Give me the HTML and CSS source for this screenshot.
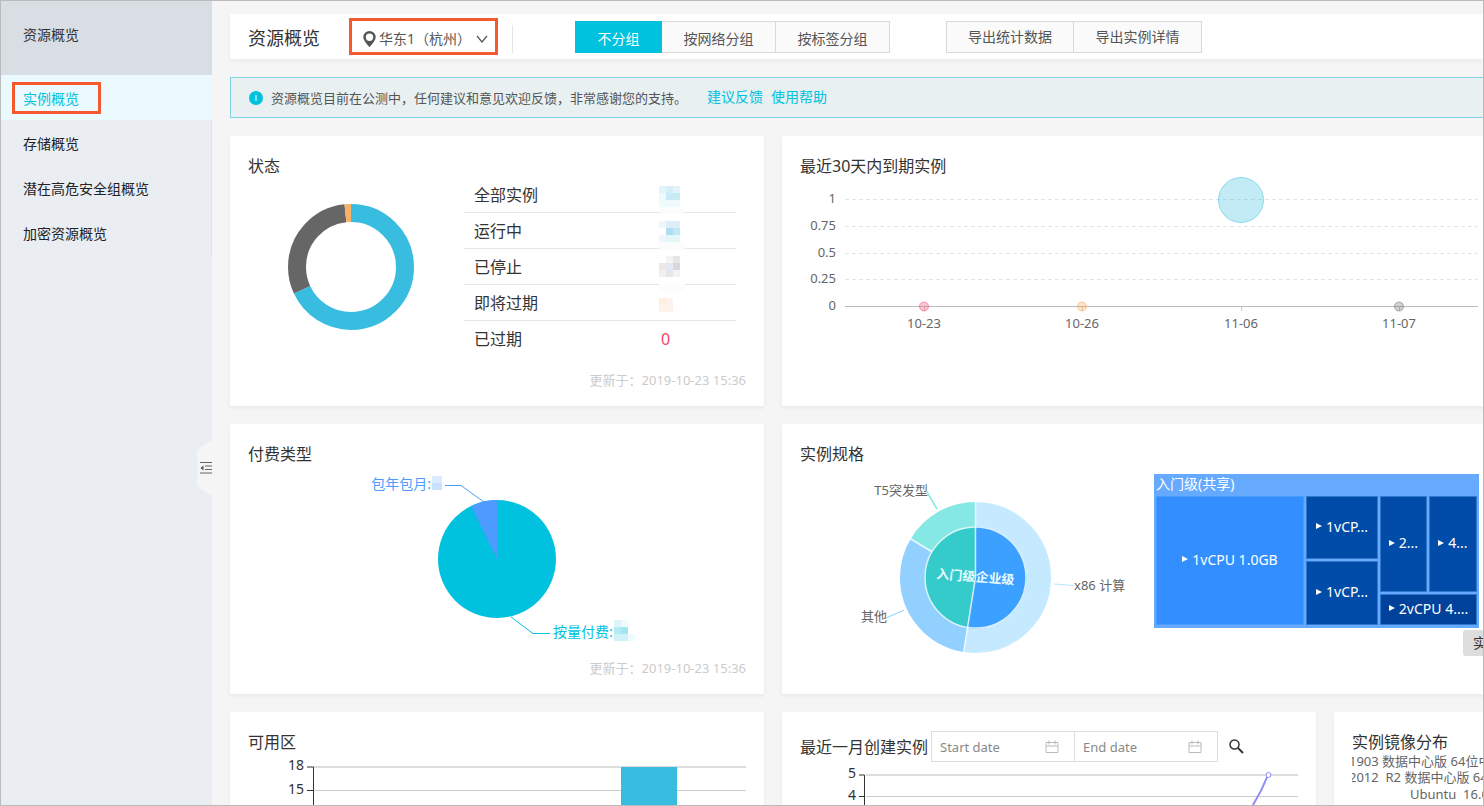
FILE: index.html
```html
<!DOCTYPE html>
<html lang="zh-CN">
<head>
    <meta charset="UTF-8">
    <meta name="viewport" content="width=device-width, initial-scale=1.0">
    <title>资源概览</title>
    <link rel="stylesheet" href="styles.css">
</head>
<body>
    <aside class="sidebar">
        <div class="sidebar-title">资源概览</div>
        <nav class="sidebar-nav">
            <a href="#" class="active"><span class="marked">实例概览</span></a>
            <a href="#">存储概览</a>
            <a href="#">潜在高危安全组概览</a>
            <a href="#">加密资源概览</a>
        </nav>
        <button type="button" class="collapse-btn" aria-label="收起">
            <svg width="16" height="56" viewBox="0 0 16 56">
                <path d="M0 10 L15 0 H16 V56 H15 L0 46 Z" fill="#f5f5f5"/>
                <path d="M3 22.5h12M8 26h7M8 29.5h7M3 33h12" stroke="#666" stroke-width="1.2"/>
                <path d="M6.5 25.500v5l-3-2.500z" fill="#555"/>
            </svg>
        </button>
    </aside>

    <main class="main-content">
        <header class="toolbar">
            <h1>资源概览</h1>
            <label class="region">
                <svg width="13" height="16" viewBox="0 0 13 16">
                    <path fill="#555" fill-rule="evenodd" d="M6.5 0A6.2 6.2 0 0 0 .3 6.2C.3 9.8 6.5 16 6.5 16s6.200-6.200 6.200-9.800A6.200 6.200 0 0 0 6.500 0zm0 2.600a3.700 3.700 0 1 1 0 7.400 3.700 3.700 0 0 1 0-7.400z"/>
                </svg>
                <select aria-label="地域">
                    <option>华东1（杭州）</option>
                </select>
                <svg width="12" height="8" viewBox="0 0 12 8">
                    <path d="M1 1l5 6 5-6" fill="none" stroke="#555" stroke-width="1.2"/>
                </svg>
            </label>
            <div class="btn-group view-group">
                <button type="button" class="active">不分组</button>
                <button type="button">按网络分组</button>
                <button type="button">按标签分组</button>
            </div>
            <div class="btn-group">
                <button type="button">导出统计数据</button>
                <button type="button">导出实例详情</button>
            </div>
        </header>

        <div class="notice">
            <svg width="14" height="14" viewBox="0 0 14 14">
                <circle cx="7" cy="7" r="7" fill="#00c1de"/>
                <path d="M7 4v6" stroke="#b8eef6" stroke-width="1.4"/>
            </svg>
            <span>资源概览目前在公测中，任何建议和意见欢迎反馈，非常感谢您的支持。</span>
            <a href="#">建议反馈</a>
            <a href="#">使用帮助</a>
        </div>

        <div class="card-grid">
            <section class="card">
                <h2>状态</h2>
                <div class="card-body status">
                    <svg width="126" height="126" viewBox="0 0 126 126">
                        <g fill="none" stroke-width="18" transform="rotate(-90 63 63)">
                            <circle cx="63" cy="63" r="54" stroke="#38bde0" pathLength="360" stroke-dasharray="245 115"/>
                            <circle cx="63" cy="63" r="54" stroke="#666" pathLength="360" stroke-dasharray="109 251" stroke-dashoffset="-245"/>
                            <circle cx="63" cy="63" r="54" stroke="#f7b267" pathLength="360" stroke-dasharray="6 354" stroke-dashoffset="-354"/>
                        </g>
                    </svg>
                    <table>
                        <tr>
                            <th scope="row">全部实例</th>
                            <td>
                                <svg class="mosaic" width="26" height="37" viewBox="0 0 26 37">
                                    <path fill="#e2f4fa" d="M0 9h7v7H0zM14 9h7v7h-7z"/>
                                    <path fill="#d8eef7" d="M7 9h7v7H7z"/>
                                    <path fill="#c8eaf4" d="M7 16h14v7H7z"/>
                                    <path fill="#effafc" d="M0 16h7v7H0zM0 23h21v7H0z"/>
                                    <path fill="#fcfcfc" d="M0 30h26v7H0z"/>
                                </svg>
                            </td>
                        </tr>
                        <tr>
                            <th scope="row">运行中</th>
                            <td>
                                <svg class="mosaic" width="26" height="37" viewBox="0 0 26 37">
                                    <path fill="#eef8fb" d="M0 8h7v7H0zM0 22h7v7H0z"/>
                                    <path fill="#dceff8" d="M7 8h14v7H7z"/>
                                    <path fill="#b0def0" d="M7 15h7v7H7z"/>
                                    <path fill="#c2e8f6" d="M14 15h7v7h-7z"/>
                                    <path fill="#e5f6fb" d="M7 22h14v7H7z"/>
                                    <path fill="#fcfcfc" d="M0 29h26v8H0z"/>
                                </svg>
                            </td>
                        </tr>
                        <tr>
                            <th scope="row">已停止</th>
                            <td>
                                <svg class="mosaic" width="26" height="42" viewBox="0 0 26 42">
                                    <path fill="#f3f3f5" d="M7 7h7v7H7zM14 21h7v7h-7z"/>
                                    <path fill="#e6e6e8" d="M14 7h7v7h-7zM7 21h7v7H7z"/>
                                    <path fill="#f1e6e1" d="M0 14h7v7H0z"/>
                                    <path fill="#e2eaf6" d="M7 14h7v7H7z"/>
                                    <path fill="#d8d8da" d="M14 14h7v7h-7z"/>
                                    <path fill="#f2efed" d="M0 21h7v7H0z"/>
                                    <path fill="#fcfcfc" d="M0 35h26v7H0z"/>
                                </svg>
                            </td>
                        </tr>
                        <tr>
                            <th scope="row">即将过期</th>
                            <td>
                                <svg class="mosaic" width="26" height="36" viewBox="0 0 26 36">
                                    <path fill="#fcf0dc" d="M0 13h7v7H0z"/>
                                    <path fill="#fdf3ec" d="M7 13h7v7H7zM0 20h14v7H0z"/>
                                </svg>
                            </td>
                        </tr>
                        <tr>
                            <th scope="row">已过期</th>
                            <td class="expired">0</td>
                        </tr>
                    </table>
                </div>
                <p class="updated">更新于：2019-10-23 15:36</p>
            </section>

            <section class="card wide">
                <h2>最近30天内到期实例</h2>
                <svg class="chart" width="684" height="193" viewBox="0 0 684 193">
                    <path d="M45 22.5H678M45 49.5H678M45 76.5H678M45 102.5H678" stroke="#e3e3e3" stroke-dasharray="4 3"/>
                    <path d="M45 129.5H678" stroke="#bbb"/>
                    <path d="M124.5 130v4M282.5 130v4M441.5 130v4M599.5 130v4" stroke="#ccc"/>
                    <g text-anchor="end">
                        <text x="36" y="26">1</text>
                        <text x="36" y="53">0.75</text>
                        <text x="36" y="80">0.5</text>
                        <text x="36" y="106">0.25</text>
                        <text x="36" y="133">0</text>
                    </g>
                    <g text-anchor="middle">
                        <text x="124" y="151">10-23</text>
                        <text x="282" y="151">10-26</text>
                        <text x="441" y="151">11-06</text>
                        <text x="599" y="151">11-07</text>
                    </g>
                    <g fill-opacity=".3" stroke-opacity=".5">
                        <circle cx="441" cy="23" r="22.5" fill="#38bde0" stroke="#38bde0"/>
                        <circle cx="124" cy="129.5" r="4.5" fill="#f4436c" stroke="#f4436c"/>
                        <circle cx="282" cy="129.5" r="4.5" fill="#f7a649" stroke="#f7a649"/>
                        <circle cx="599" cy="129.5" r="4.5" fill="#666" stroke="#666"/>
                    </g>
                </svg>
            </section>

            <section class="card">
                <h2>付费类型</h2>
                <div class="card-body">
                    <svg class="chart pay" width="498" height="192" viewBox="0 0 498 192">
                        <circle cx="249" cy="94" r="59" fill="#00c1de"/>
                        <path d="M249 94L223 41A59 59 0 0 1 249 35z" fill="#4d9bff"/>
                        <path d="M197 20.5H213L236 37" fill="none" stroke="#4d9bff"/>
                        <path d="M263 152L285 168.5H302" fill="none" stroke="#00c1de"/>
                        <text x="183" y="24" text-anchor="end">包年包月:</text>
                        <text x="305" y="172">按量付费:</text>
                        <path fill="#dcebff" d="M184 11h10v7h-10z"/>
                        <path fill="#c9e0ff" d="M184 18h10v7h-10z"/>
                        <path fill="#ddf5fa" d="M366 155h7v7h-7z"/>
                        <path fill="#effbfd" d="M373 155h7v7h-7zM380 169h7v7h-7z"/>
                        <path fill="#b5ebf4" d="M366 162h7v7h-7z"/>
                        <path fill="#a2e6f2" d="M373 162h7v7h-7z"/>
                        <path fill="#d0f2f8" d="M366 169h14v7h-14z"/>
                    </svg>
                </div>
                <p class="updated">更新于：2019-10-23 15:36</p>
            </section>

            <section class="card wide">
                <h2>实例规格</h2>
                <div class="spec">
                    <svg class="chart" width="354" height="193" viewBox="0 0 354 193">
                        <g fill="none" stroke-width="25" transform="rotate(-90 175.5 112.5)">
                            <circle cx="175.5" cy="112.5" r="63" stroke="#c5eaff" pathLength="360" stroke-dasharray="189 171"/>
                            <circle cx="175.5" cy="112.5" r="63" stroke="#91d0ff" pathLength="360" stroke-dasharray="112 248" stroke-dashoffset="-189"/>
                            <circle cx="175.5" cy="112.5" r="63" stroke="#86e8e4" pathLength="360" stroke-dasharray="59 301" stroke-dashoffset="-301"/>
                        </g>
                        <circle cx="175.5" cy="112.5" r="51" fill="#36cbcb"/>
                        <path d="M175.5 112.5V61.5a51 51 0 1 1-8 101.4z" fill="#3ba0ff"/>
                        <g fill="none" stroke="#fff" stroke-opacity=".8" stroke-width="1.5">
                            <circle cx="175.5" cy="112.5" r="50.5"/>
                            <path d="M175.5 36V112.5L163.5 188M131.5 86.5L110 73.5"/>
                        </g>
                        <path d="M127 27l10 17" stroke="#86e8e4" stroke-width="1.5"/>
                        <path d="M86 153l18-8" stroke="#91d0ff"/>
                        <path d="M254 119l20 1.5" stroke="#b5e3ff"/>
                        <text x="128" y="30" text-anchor="end">T5突发型</text>
                        <text x="87" y="156" text-anchor="end">其他</text>
                        <text x="274" y="125">x86 计算</text>
                        <g class="inner" text-anchor="middle">
                            <text x="156" y="115" transform="rotate(5 156 110)">入门级</text>
                            <text x="195" y="118" transform="rotate(5 195 114)">企业级</text>
                        </g>
                    </svg>
                    <div class="treemap">
                        <div class="treemap-title">入门级(共享)</div>
                        <div class="treemap-cells">
                            <div class="cell main">1vCPU 1.0GB</div>
                            <div class="cell">1vCP...</div>
                            <div class="cell low">1vCP...</div>
                            <div class="cell tall">2...</div>
                            <div class="cell tall">4...</div>
                            <div class="cell foot">2vCPU 4....</div>
                        </div>
                        <div class="tooltip">实例</div>
                    </div>
                </div>
            </section>

            <section class="card">
                <h2>可用区</h2>
                <svg class="chart axis" width="498" height="193" viewBox="0 0 498 193">
                    <path d="M66 14H498" stroke="#ddd" stroke-width="2"/>
                    <path d="M66 37.5H498M66 61.5H498M66 85.5H498" stroke="#ccc"/>
                    <path d="M59 14H65.5V193M59 37.5h6M59 61.5h6M59 85.5h6" fill="none" stroke="#333"/>
                    <rect x="373" y="14" width="56" height="179" fill="#38bde0"/>
                    <g text-anchor="end">
                        <text x="56" y="17">18</text>
                        <text x="56" y="41">15</text>
                    </g>
                </svg>
            </section>

            <section class="card">
                <div class="card-head">
                    <h2>最近一月创建实例</h2>
                    <div class="date-range">
                        <label>
                            <input type="text" placeholder="Start date" aria-label="Start date">
                            <svg width="14" height="14" viewBox="0 0 14 14" fill="none" stroke="#bbb">
                                <path d="M1 2.5h12v10H1zM1 6h12M4 .5v4M10 .5v4"/>
                            </svg>
                        </label>
                        <label>
                            <input type="text" placeholder="End date" aria-label="End date">
                            <svg width="14" height="14" viewBox="0 0 14 14" fill="none" stroke="#bbb">
                                <path d="M1 2.5h12v10H1zM1 6h12M4 .5v4M10 .5v4"/>
                            </svg>
                        </label>
                    </div>
                    <button type="button" class="search-btn" aria-label="搜索">
                        <svg width="15" height="15" viewBox="0 0 15 15" fill="none" stroke="#333">
                            <circle cx="5.5" cy="5.5" r="4.5" stroke-width="1.5"/>
                            <path d="M9 9l5 5" stroke-width="2"/>
                        </svg>
                    </button>
                </div>
                <svg class="chart axis" width="498" height="176" viewBox="0 0 498 176">
                    <path d="M66 12H498" stroke="#ddd" stroke-width="2"/>
                    <path d="M66 33.5H498M66 54.5H498" stroke="#ccc"/>
                    <path d="M59 12H64.5V176M59 33.5h6M59 54.5h6" fill="none" stroke="#333"/>
                    <path d="M443 57Q459 35 468 12" fill="none" stroke="#8d8df5" stroke-width="2"/>
                    <circle cx="468.5" cy="12" r="2.5" fill="#fff" stroke="#8d8df5"/>
                    <g text-anchor="end">
                        <text x="56" y="15">5</text>
                        <text x="56" y="37">4</text>
                    </g>
                </svg>
            </section>

            <section class="card">
                <h2>实例镜像分布</h2>
                <svg class="chart" width="498" height="193" viewBox="0 0 498 193">
                    <text x="-3" y="13">1903 数据中心版 64位中文版</text>
                    <text x="-3" y="29" xml:space="preserve">2012  R2 数据中心版 64位中文版</text>
                    <text x="58" y="46" xml:space="preserve">Ubuntu  16.04 64位</text>
                </svg>
            </section>
        </div>
    </main>
</body>
</html>
```

FILE: styles.css
```css
* {
    margin: 0;
    padding: 0;
    box-sizing: border-box;
}

body {
    font-family: 'Noto Sans', 'Noto Sans CJK SC', sans-serif;
    font-size: 14px;
    color: #333;
    background-color: #f5f5f5;
    border: 1px solid #bbb;
    height: 100vh;
    display: flex;
    overflow: hidden;
}

a {
    text-decoration: none;
    color: #00c1de;
}

button,
input,
select {
    font: inherit;
    color: inherit;
}

button,
select {
    cursor: pointer;
}

svg {
    display: block;
    flex-shrink: 0;
}

/* Sidebar */
.sidebar {
    position: relative;
    width: 211px;
    flex-shrink: 0;
    background-color: #eaedf2;
}

.sidebar-title {
    height: 74px;
    padding: 24px 22px;
    line-height: 20px;
    background-color: #d9dde4;
}

.sidebar-nav {
    border-right: 1px solid #e0e3e8;
}

.sidebar-nav a {
    display: flex;
    align-items: center;
    height: 45px;
    padding-left: 22px;
    color: #222;
}

.sidebar-nav a.active {
    padding-left: 11px;
    margin-right: -1px;
    color: #00c1de;
    background-color: #ebfafe;
}

.marked {
    padding: 4px 19px 2px 8px;
    line-height: 20px;
    border: 3px solid #f4592f;
}

.collapse-btn {
    position: absolute;
    top: 439px;
    right: -1px;
    border: none;
    background: none;
}

/* Top bar */
.main-content {
    flex: 1;
    min-width: 0;
    padding: 13px 0 0 18px;
    overflow: hidden;
}

.toolbar {
    display: flex;
    align-items: center;
    height: 45px;
    padding-left: 18px;
    margin-bottom: 18px;
    background: white;
    box-shadow: 0 2px 4px rgba(0, 20, 60, 0.05);
}

.toolbar h1 {
    width: 101px;
    font-size: 18px;
    font-weight: normal;
}

.region {
    position: relative;
    display: flex;
    align-items: center;
    gap: 3px;
    width: 149px;
    height: 37px;
    padding: 4px 7px 0 11px;
    margin-right: 77px;
    border: 3px solid #f4592f;
}

.region::after {
    content: '';
    position: absolute;
    right: -18px;
    width: 1px;
    height: 28px;
    background: #e5e5e5;
}

.region select {
    flex: 1;
    min-width: 0;
    appearance: none;
    border: none;
    background: none;
    color: #555;
}

.btn-group {
    display: flex;
    margin-right: 56px;
}

.btn-group button {
    height: 32px;
    width: 128px;
    padding-bottom: 1px;
    color: #555;
    background: #fafafa;
    border: 1px solid #d9d9d9;
}

.btn-group button + button {
    border-left: none;
}

.view-group button {
    width: 114px;
    padding-top: 3px;
}

.view-group button.active {
    width: 87px;
    color: white;
    background: #00c1de;
    border-color: #00c1de;
}

.notice {
    display: flex;
    align-items: center;
    gap: 8px;
    height: 41px;
    padding-left: 18px;
    margin-bottom: 18px;
    font-size: 13px;
    color: #555;
    background: #e8f0f1;
    border: 1px solid #7ed5df;
    border-right: none;
}

.notice span {
    margin-right: 12px;
}

.notice a {
    font-size: 14px;
    line-height: 20px;
    margin-bottom: 2px;
}

/* Cards */
.card-grid {
    display: grid;
    grid-template-columns: repeat(3, minmax(534px, 1fr));
    gap: 18px;
}

.card {
    display: flex;
    flex-direction: column;
    min-height: 270px;
    padding: 18px 18px 16px;
    background: white;
    box-shadow: 0 2px 4px rgba(0, 20, 60, 0.05);
}

.card.wide {
    grid-column: span 2;
}

.card h2 {
    height: 23px;
    font-size: 16px;
    font-weight: normal;
    line-height: 24px;
}

.card-body {
    flex: 1;
}

.updated {
    text-align: right;
    font-size: 13px;
    line-height: 20px;
    color: #ccc;
}

.status {
    display: flex;
    align-items: flex-start;
    gap: 50px;
    padding-left: 40px;
}

.status > svg {
    margin-top: 27px;
}

.status table {
    width: 272px;
    border-collapse: separate;
    border-spacing: 0;
    font-size: 16px;
}

.status th {
    width: 185px;
    padding-left: 10px;
    font-weight: normal;
    text-align: left;
}

.status td {
    position: relative;
    padding-left: 12px;
}

.status th,
.status td {
    height: 36px;
    line-height: 24px;
    border-bottom: 1px solid #e5e5e5;
}

.status tr:last-child th,
.status tr:last-child td {
    border-bottom: none;
}

.status .expired {
    color: #f4436c;
}

.mosaic {
    position: absolute;
    top: 0;
    left: 10px;
}

/* Charts */
.chart text {
    font-size: 13px;
    fill: #666;
}

.chart.pay {
    margin: 0 auto;
}

.chart.pay text {
    font-size: 14px;
    fill: #4d9bff;
}

.chart.pay text + text {
    fill: #00c1de;
}

.chart.axis text {
    font-size: 14px;
    fill: #333;
}

.chart .inner text {
    font-size: 13px;
    font-weight: bold;
    fill: #e8fbff;
}

.spec {
    display: flex;
    align-items: flex-start;
}

/* Treemap */
.treemap {
    position: relative;
    width: 325px;
    margin-top: 9px;
    padding: 0 2px 3px;
    color: white;
    background: #66aaff;
}

.treemap-title {
    height: 22px;
    line-height: 20px;
}

.treemap-cells {
    display: grid;
    grid-template-columns: 148px 72px 47px 48px;
    grid-template-rows: 63px 31px 31px;
    grid-auto-flow: column;
    gap: 2px;
}

.cell {
    display: flex;
    align-items: center;
    justify-content: center;
    gap: 4px;
    padding-bottom: 3px;
    white-space: nowrap;
    background: #004ca8;
    border: 1px solid #2f78cc;
}

.cell::before {
    content: '';
    border: 3px solid transparent;
    border-left: 6px solid white;
    border-right: none;
}

.cell.main {
    grid-row: 1 / 4;
    background: #338fff;
    border-color: #4a9bff;
}

.cell.low {
    grid-row: 2 / 4;
}

.cell.tall {
    grid-row: 1 / 3;
}

.cell.foot {
    grid-area: 3 / 3 / 4 / 5;
    background: #00419a;
}

.tooltip {
    position: absolute;
    top: 156px;
    left: 309px;
    padding: 3px 10px;
    line-height: 20px;
    color: #333;
    background: #ddd;
    border-radius: 3px;
    white-space: nowrap;
}

/* Date filter */
.card-head {
    display: flex;
    align-items: center;
    gap: 3px;
    height: 33px;
}

.date-range {
    display: flex;
}

.date-range label {
    display: flex;
    align-items: center;
    width: 144px;
    height: 31px;
    padding: 0 15px 0 8px;
    border: 1px solid #ddd;
}

.date-range label + label {
    margin-left: -1px;
}

.date-range input {
    flex: 1;
    min-width: 0;
    border: none;
    outline: none;
    font-size: 13px;
    background: transparent;
}

.date-range input::placeholder {
    color: #888;
}

.search-btn {
    padding: 8px;
    border: none;
    background: none;
}
```
